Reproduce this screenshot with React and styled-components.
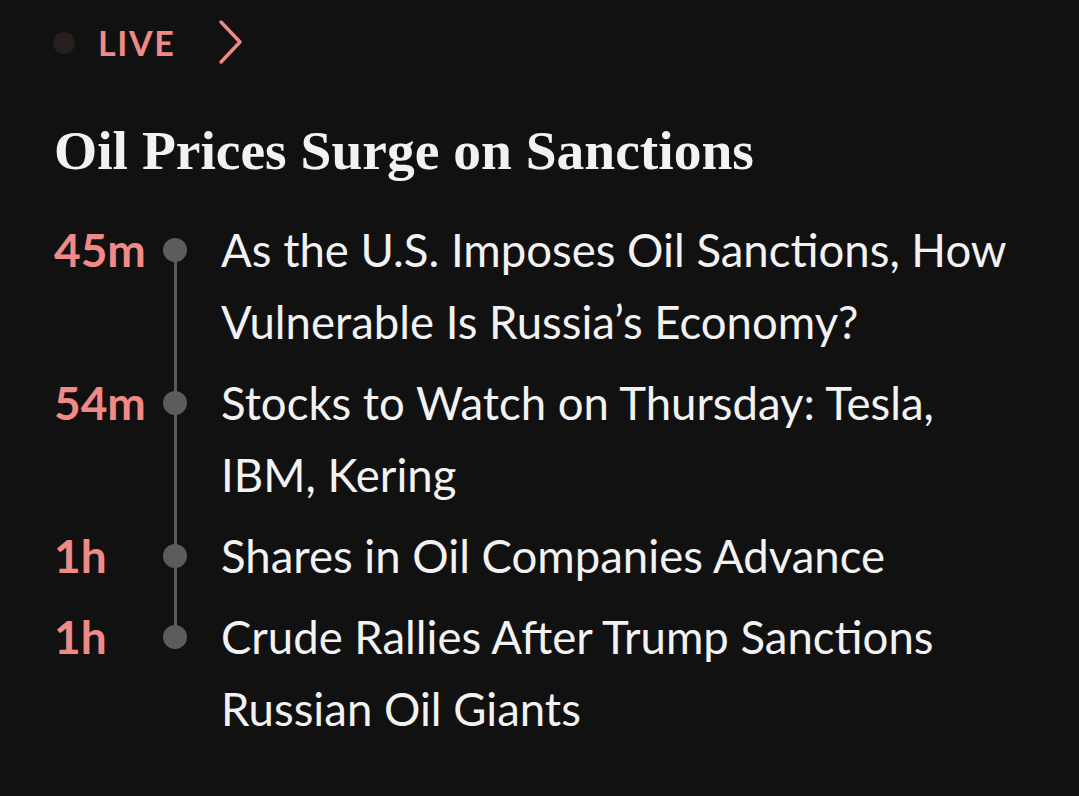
import React from "react";
import styled, { createGlobalStyle } from "styled-components";

const GlobalStyle = createGlobalStyle`
  html, body {
    margin: 0;
    padding: 0;
    background: #111111;
  }
  body {
    font-family: "Lato", "Noto Sans", sans-serif;
    -webkit-font-smoothing: antialiased;
  }
`;

const salmon = "#f08a86";
const rowGap = 9;

const Page = styled.div`
  width: 1079px;
  height: 796px;
  box-sizing: border-box;
  padding: 0 0 0 54px;
  background: #111111;
  overflow: hidden;
`;

const LiveBar = styled.div`
  display: flex;
  align-items: center;
  height: 84px;
`;

const LiveDot = styled.span`
  width: 22px;
  height: 22px;
  border-radius: 50%;
  background: #2a1f1f;
  margin: 2px 0 0 -1px;
`;

const LiveLabel = styled.span`
  font-family: "Lato", sans-serif;
  font-weight: 700;
  font-size: 34px;
  letter-spacing: 1.6px;
  color: ${salmon};
  margin-left: 23px;
`;

const Chevron = styled.svg`
  margin-left: 42px;
  width: 28px;
  height: 46px;
`;

const Heading = styled.h1`
  margin: 39px 0 0 0;
  font-family: "Liberation Serif", "Times New Roman", serif;
  font-weight: 700;
  font-size: 55.5px;
  line-height: 56px;
  color: #f2f2f2;
`;

const Feed = styled.ul`
  list-style: none;
  margin: 35px 0 0 0;
  padding: 0;
  display: flex;
  flex-direction: column;
  gap: ${rowGap}px;
`;

const Item = styled.li`
  display: grid;
  grid-template-columns: 100px 42px 1fr;
  align-items: start;
`;

const Time = styled.span`
  font-family: "Lato", sans-serif;
  font-weight: 700;
  font-size: 46px;
  line-height: 72px;
  color: ${salmon};
`;

const Rail = styled.div`
  position: relative;
  align-self: stretch;

  &::before {
    content: "";
    position: absolute;
    left: 9px;
    top: 24px;
    width: 24px;
    height: 24px;
    border-radius: 50%;
    background: #5c5c5c;
    z-index: 1;
  }

  &::after {
    content: "";
    display: ${(p) => (p.$last ? "none" : "block")};
    position: absolute;
    left: 20px;
    top: 36px;
    width: 3px;
    height: calc(100% + ${rowGap}px);
    background: #5a5a5a;
  }
`;

const Title = styled.a`
  font-family: "Lato", sans-serif;
  font-weight: 400;
  font-size: 45.5px;
  line-height: 72px;
  color: #f2f2f2;
  text-decoration: none;
  padding-left: 25px;
  white-space: nowrap;

  span {
    display: block;
  }
`;

const items = [
  { time: "45m", lines: ["As the U.S. Imposes Oil Sanctions, How", "Vulnerable Is Russia\u2019s Economy?"] },
  { time: "54m", lines: ["Stocks to Watch on Thursday: Tesla,", "IBM, Kering"] },
  { time: "1h", lines: ["Shares in Oil Companies Advance"] },
  { time: "1h", lines: ["Crude Rallies After Trump Sanctions", "Russian Oil Giants"] },
];

export default function App() {
  return (
    <>
      <GlobalStyle />
      <Page>
        <LiveBar>
          <LiveDot />
          <LiveLabel>LIVE</LiveLabel>
          <Chevron viewBox="0 0 28 46" fill="none">
            <path d="M4 3 L23 23 L4 43" stroke={salmon} strokeWidth="3.4" strokeLinecap="round" strokeLinejoin="round" />
          </Chevron>
        </LiveBar>
        <Heading>Oil Prices Surge on Sanctions</Heading>
        <Feed>
          {items.map((it, i) => (
            <Item key={i}>
              <Time>{it.time}</Time>
              <Rail $last={i === items.length - 1} />
              <Title href="#">
                {it.lines.map((l, j) => (
                  <span key={j}>{l}</span>
                ))}
              </Title>
            </Item>
          ))}
        </Feed>
      </Page>
    </>
  );
}
